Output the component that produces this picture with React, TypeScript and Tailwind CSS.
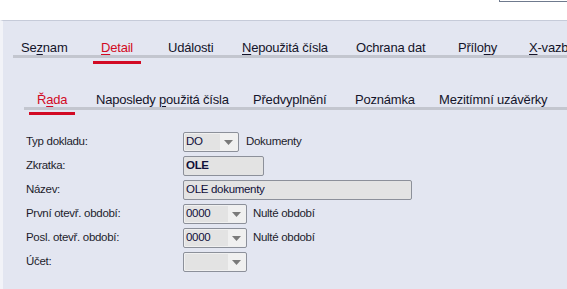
import React from "react";

const font = { fontFamily: '"Liberation Sans", Arial, sans-serif' };

function U({ c }: { c: string }) {
  return <span className="underline underline-offset-2 decoration-1">{c}</span>;
}

const topTabs: { w: number; node: React.ReactNode; active?: boolean }[] = [
  { w: 80, node: <>Se<U c="z" />nam</> },
  { w: 67, node: <><U c="D" />etail</>, active: true },
  { w: 74, node: <>Události</> },
  { w: 114, node: <><U c="N" />epoužitá čísla</> },
  { w: 102, node: <>Ochrana dat</> },
  { w: 71, node: <>Přílo<U c="h" />y</> },
  { w: 80, node: <><U c="X" />-vazby</> },
];

const subTabs: { w: number; node: React.ReactNode; active?: boolean }[] = [
  { w: 59, node: <>Ř<U c="a" />da</>, active: true },
  { w: 157, node: <>Naposledy <U c="p" />oužitá čísla</> },
  { w: 102, node: <>Předvyplnění</> },
  { w: 84, node: <>Poznámka</> },
  { w: 150, node: <>Mezitímní uzávěrky</> },
];

const formText = "text-[11.5px] tracking-[-0.3px]";

function Combo({ value, w }: { value: string; w: number }) {
  return (
    <div
      className="flex h-[20px] items-stretch rounded-[2px] border border-[#8c909a] bg-[#f0f0f0] p-[1px]"
      style={{ width: w }}
    >
      <div className={`flex flex-1 items-center bg-[#e3e3e3] pl-[1px] leading-none text-[#10103a] ${formText}`}>
        {value}
      </div>
      <div className="flex w-[17px] items-center justify-center">
        <svg width="9" height="5" viewBox="0 0 9 5">
          <polygon points="0,0 9,0 4.5,5" fill="#7a7a7a" />
        </svg>
      </div>
    </div>
  );
}

function Field({ value, w, bold }: { value: string; w: number; bold?: boolean }) {
  return (
    <div
      className={`flex h-[20px] items-center rounded-[2px] border border-[#8c909a] bg-[#e3e3e3] pl-[2px] leading-none text-[#10103a] ${formText} ${bold ? "font-bold" : ""}`}
      style={{ width: w }}
    >
      {value}
    </div>
  );
}

function Row({ label, children }: { label: string; children: React.ReactNode }) {
  return (
    <div className="flex h-[24px] items-center">
      <div className={`w-[157px] text-[#1c1c2c] ${formText}`}>{label}</div>
      <div className="flex items-center">{children}</div>
    </div>
  );
}

export default function App() {
  return (
    <div className="h-[289px] w-[567px] overflow-hidden bg-white" style={font}>
      <div className="flex h-[20px] justify-end">
        <div className="h-[2px] w-[68px] border-b border-l border-[#6f7a8e]" />
      </div>
      <div className="h-[269px] border-l-[3px] border-t border-l-[#f2f3f8] border-t-[#c6cbd9] bg-[#e3e6f1]">
        {/* top tabs */}
        <div className="ml-[10px] mt-[14px] flex h-[23px] border-b-[3px] border-[#c3c6cf]">
          {topTabs.map((t, i) => (
            <div key={i} className="shrink-0" style={{ width: t.w }}>
              <div
                className={`-mb-[3px] inline-block h-[23px] border-b-[3px] px-[8px] text-[13px] leading-[14px] tracking-[-0.2px] ${
                  t.active ? "border-[#d20a24] text-[#d20a24]" : "border-transparent text-[#14142a]"
                }`}
              >
                {t.node}
              </div>
            </div>
          ))}
        </div>
        {/* sub tabs */}
        <div className="ml-[21px] mt-[29px] flex h-[23px] border-b-[3px] border-[#c3c6cf]">
          <div className="w-[5px] shrink-0" />
          {subTabs.map((t, i) => (
            <div key={i} className="shrink-0" style={{ width: t.w }}>
              <div
                className={`-mb-[3px] inline-block h-[23px] border-b-[3px] px-[8px] text-[13px] leading-[15px] tracking-[-0.2px] ${
                  t.active ? "border-[#d20a24] text-[#d20a24]" : "border-transparent text-[#14142a]"
                }`}
              >
                {t.node}
              </div>
            </div>
          ))}
        </div>
        {/* form */}
        <div className="ml-[23px] mt-[20px] flex flex-col">
          <Row label="Typ dokladu:">
            <Combo value="DO" w={56} />
            <span className={`ml-[7px] text-[#1c1c2c] ${formText}`}>Dokumenty</span>
          </Row>
          <Row label="Zkratka:">
            <Field value="OLE" w={81} bold />
          </Row>
          <Row label="Název:">
            <Field value="OLE dokumenty" w={229} />
          </Row>
          <Row label="První otevř. období:">
            <Combo value="0000" w={64} />
            <span className={`ml-[6px] text-[#1c1c2c] ${formText}`}>Nulté období</span>
          </Row>
          <Row label="Posl. otevř. období:">
            <Combo value="0000" w={64} />
            <span className={`ml-[6px] text-[#1c1c2c] ${formText}`}>Nulté období</span>
          </Row>
          <Row label="Účet:">
            <Combo value="" w={64} />
          </Row>
        </div>
      </div>
    </div>
  );
}
